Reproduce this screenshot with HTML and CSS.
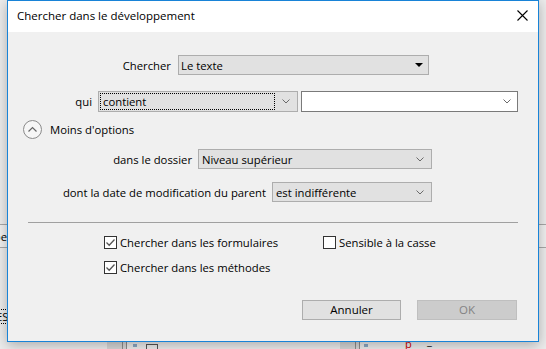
FILE: index.html
```html
<!DOCTYPE html>
<html lang="fr">
<head>
<meta charset="utf-8">
<title>Chercher dans le développement</title>
<link rel="stylesheet" href="styles.css">
</head>
<body>
<div class="desktop">
  <div class="band"><span class="band-text">Type</span></div>
  <span class="es">ES</span>
  <div class="bottom-strip">
    <div class="split split-a"></div>
    <div class="mini-icon icon-a"></div>
    <div class="mini-box"></div>
    <div class="split split-b"></div>
    <div class="mini-icon icon-b"></div>
    <span class="red-p">p</span>
    <span class="dash">_</span>
  </div>

  <div class="dialog">
    <div class="titlebar">
      <span class="title">Chercher dans le développement</span>
      <svg class="close" width="11" height="11" viewBox="0 0 11 11"><path d="M0.5 0.5 L10.5 10.5 M10.5 0.5 L0.5 10.5" stroke="#000" stroke-width="1.1" fill="none"/></svg>
    </div>
    <div class="body">
      <div class="row row-1">
        <span class="lbl lbl-1">Chercher</span>
        <div class="combo combo-1">
          <span class="val">Le texte</span>
          <svg class="tri" width="8" height="4" viewBox="0 0 8 4"><path d="M0 0 H8 L4 4 Z" fill="#000"/></svg>
        </div>
      </div>

      <div class="row row-2">
        <span class="lbl lbl-2">qui</span>
        <div class="combo combo-2">
          <span class="focus">contient</span>
          <span class="chev-box"><svg width="8" height="5" viewBox="0 0 8 5"><path d="M0.5 0.5 L4 4 L7.5 0.5" stroke="#6a6a6a" fill="none"/></svg></span>
        </div>
        <div class="combo combo-3">
          <span class="val"></span>
          <svg class="chev" width="8" height="5" viewBox="0 0 8 5"><path d="M0.5 0.5 L4 4 L7.5 0.5" stroke="#6a6a6a" fill="none"/></svg>
        </div>
      </div>

      <div class="row row-3">
        <svg class="circle" width="19" height="19" viewBox="0 0 19 19"><circle cx="9.5" cy="9.5" r="9" stroke="#8a8a8a" fill="#f6f6f6"/><path d="M5.5 11.5 L9.5 7.5 L13.5 11.5" stroke="#666" stroke-width="1.2" fill="none"/></svg>
        <span class="less">Moins d'options</span>
      </div>

      <div class="row row-4">
        <span class="lbl lbl-4">dans le dossier</span>
        <div class="combo combo-4">
          <span class="val">Niveau supérieur</span>
          <svg class="chev" width="8" height="5" viewBox="0 0 8 5"><path d="M0.5 0.5 L4 4 L7.5 0.5" stroke="#6a6a6a" fill="none"/></svg>
        </div>
      </div>

      <div class="row row-5">
        <span class="lbl lbl-5">dont la date de modification du parent</span>
        <div class="combo combo-5">
          <span class="val">est indifférente</span>
          <svg class="chev" width="8" height="5" viewBox="0 0 8 5"><path d="M0.5 0.5 L4 4 L7.5 0.5" stroke="#6a6a6a" fill="none"/></svg>
        </div>
      </div>

      <div class="sep"></div>

      <div class="checks checks-1">
        <label class="chk chk-a"><span class="box"><svg width="11" height="11" viewBox="0 0 11 11"><path d="M1.5 5.5 L4.2 8.2 L9.5 2.5" stroke="#555" stroke-width="1.3" fill="none"/></svg></span>Chercher dans les formulaires</label>
        <label class="chk chk-b"><span class="box"></span>Sensible à la casse</label>
      </div>
      <div class="checks checks-2">
        <label class="chk chk-a"><span class="box"><svg width="11" height="11" viewBox="0 0 11 11"><path d="M1.5 5.5 L4.2 8.2 L9.5 2.5" stroke="#555" stroke-width="1.3" fill="none"/></svg></span>Chercher dans les méthodes</label>
      </div>

      <div class="buttons">
        <button class="btn btn-cancel">Annuler</button>
        <button class="btn btn-ok">OK</button>
      </div>
    </div>
  </div>
</div>
</body>
</html>
```
FILE: styles.css
```css
* { box-sizing: border-box; }
html, body { margin: 0; padding: 0; }
body {
  width: 546px;
  height: 349px;
  overflow: hidden;
  background: #ececec;
  font-family: "Open Sans", "Noto Sans", "Liberation Sans", sans-serif;
  font-size: 11.3px;
  color: #000;
}
.desktop { position: relative; width: 546px; height: 349px; }

/* background window pieces */
.band {
  position: absolute;
  left: 0; top: 224px;
  width: 546px; height: 24px;
  border-top: 1px solid #a8a8a8;
  border-bottom: 1px solid #a8a8a8;
  background: #f0f0f0;
}
.band-text { position: absolute; right: 539px; top: 4px; }
.es {
  position: absolute; left: -6px; top: 309px;
  border: 1px dotted #000; line-height: 13px; padding: 0 1px;
}
.bottom-strip { position: absolute; left: 0; top: 342px; width: 546px; height: 7px; }
.split { position: absolute; top: 0; height: 7px; width: 20px; background: #d6d6d6; border-right: 1px solid #8c8c8c; }
.split-a { left: 107px; }
.split-a::after, .split-b::after { content: ""; position: absolute; right: 3px; top: 0; height: 7px; border-right: 1px solid #8c8c8c; }
.split-b { left: 340px; }
.mini-icon { position: absolute; top: 2px; width: 4px; height: 3px; background: #8aa7c2; }
.icon-a { left: 133px; }
.icon-b { left: 364px; }
.mini-box { position: absolute; left: 146px; top: 2px; width: 12px; height: 6px; border: 1px solid #555; border-bottom: none; }
.red-p { position: absolute; left: 405px; top: -4px; color: #c00; font-size: 11px; line-height: 11px; }
.dash { position: absolute; left: 427px; top: -7px; font-size: 11px; line-height: 11px; }

/* dialog window */
.dialog {
  position: absolute;
  left: 7px; top: 0;
  width: 532px; height: 342px;
  border: 1px solid #1883d7;
  background: #f0f0f0;
  box-shadow: 0 3px 12px rgba(0,0,0,0.28);
  display: flex;
  flex-direction: column;
}
.titlebar {
  height: 31px;
  background: #fff;
  display: flex;
  align-items: center;
  justify-content: space-between;
  padding: 0 10px 2px 9px;
}
.title { font-size: 11.5px; }
.close { display: block; }

.body { flex: 1; display: flex; flex-direction: column; }

.row { display: flex; align-items: center; }
.lbl { text-align: right; white-space: nowrap; }

.combo {
  display: flex;
  align-items: center;
  justify-content: space-between;
  height: 20px;
  background: #e1e1e1;
  border: 1px solid #adadad;
}
.val { white-space: nowrap; }

.row-1 { margin-top: 23px; height: 20px; }
.lbl-1 { width: 163px; margin-right: 7px; }
.combo-1 { width: 251px; padding: 0 5px 0 2px; }

.row-2 { margin-top: 16px; height: 21px; }
.lbl-2 { width: 84px; margin-right: 6px; }
.combo-2 { width: 200px; height: 21px; padding: 1px; align-items: stretch; }
.focus {
  width: 175px;
  border: 1px dotted #000;
  padding-left: 2px;
  display: flex; align-items: center;
}
.chev-box { flex: 1; display: flex; align-items: center; justify-content: center; }
.chev-box svg, .chev { display: block; }
.combo-3 { width: 217px; height: 21px; margin-left: 3px; background: #fff; border-color: #7a7a7a; padding: 0 6px 0 3px; }

.row-3 { margin-top: 8px; height: 19px; padding-left: 15px; }
.circle { display: block; }
.less { margin-left: 8px; }

.row-4 { margin-top: 10px; height: 20px; }
.lbl-4 { width: 184px; margin-right: 6px; }
.combo-4 { width: 234px; padding: 0 7px 0 3px; }

.row-5 { margin-top: 13px; height: 20px; }
.lbl-5 { width: 258px; margin-right: 6px; }
.combo-5 { width: 160px; padding: 0 7px 0 3px; }

.sep { margin: 20px 0 0 20px; width: 490px; height: 1px; background: #a0a0a0; }

.checks { display: flex; height: 13px; align-items: center; }
.checks-1 { margin-top: 13px; }
.checks-2 { margin-top: 12px; }
.chk { display: flex; align-items: center; white-space: nowrap; }
.chk-a { margin-left: 96px; width: 219px; }
.box {
  width: 13px; height: 13px;
  border: 1px solid #333;
  background: #fff;
  margin-right: 3px;
  display: flex; align-items: center; justify-content: center;
}
.box svg { display: block; }

.buttons { display: flex; margin-top: 26px; padding-left: 294px; }
.btn {
  font-family: inherit;
  font-size: 11.5px;
  height: 20px;
  padding: 0;
  border: 1px solid #adadad;
  background: #e1e1e1;
  color: #000;
  line-height: 16px;
}
.btn-cancel { width: 99px; }
.btn-ok { width: 100px; margin-left: 16px; background: #cccccc; border-color: #bfbfbf; color: #838383; }
```
